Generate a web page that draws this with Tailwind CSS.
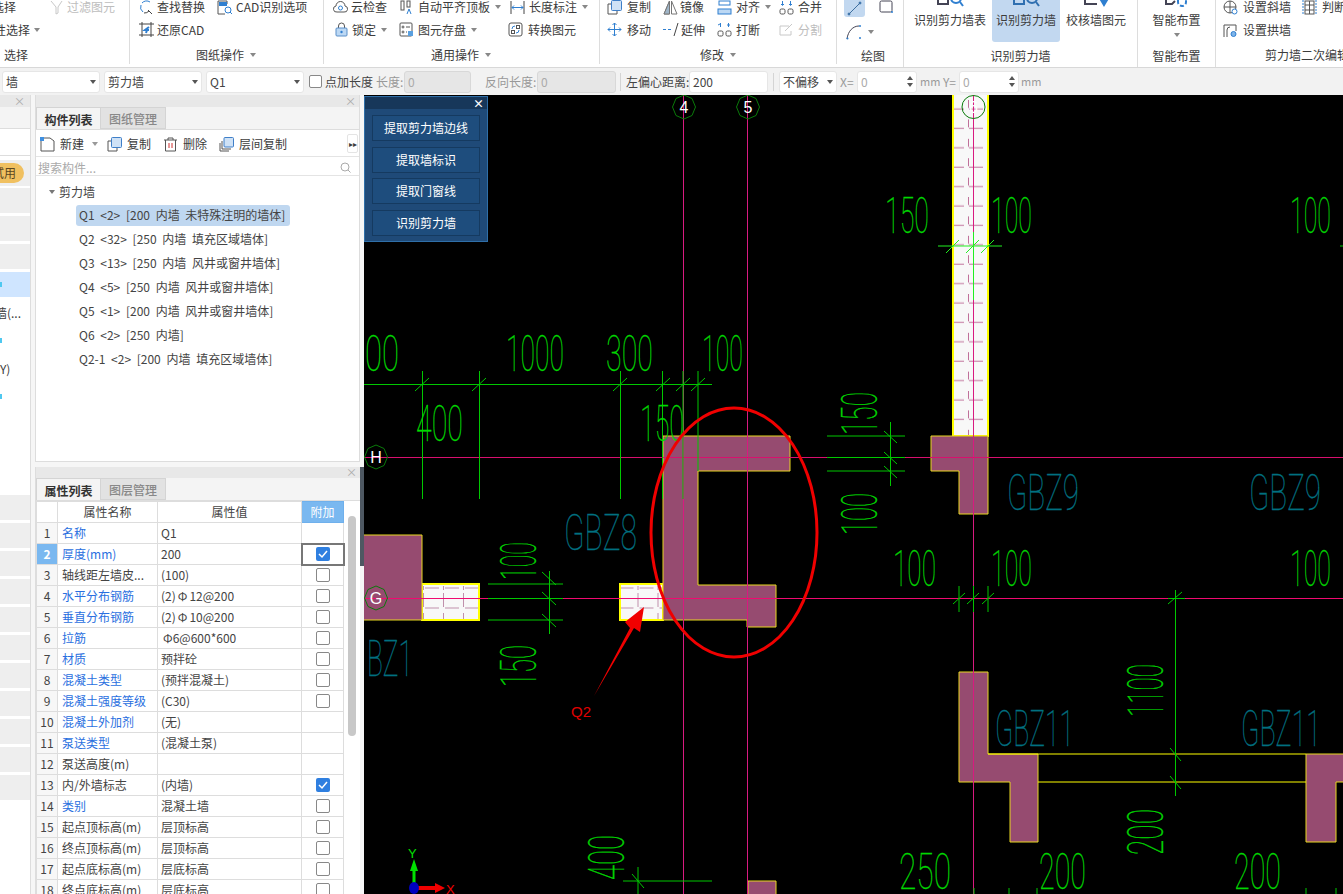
<!DOCTYPE html>
<html lang="zh-CN">
  <head>
    <meta charset="UTF-8" />
    <meta name="viewport" content="width=device-width, initial-scale=1.0" />
    <title>识别剪力墙</title>
    <script src="https://cdn.jsdelivr.net/npm/@tailwindcss/browser@4"></script>
  </head>
  <body class="w-[1343px] h-[894px] overflow-hidden bg-[#f4f4f4] text-[12px] text-[#3c3c3c] font-['Noto_Sans_CJK_SC','Noto_Sans',sans-serif] flex flex-col">
    <!-- ribbon -->
    <div class="h-[68px] shrink-0 bg-white flex overflow-hidden border-b border-[#d8d8d8]">
      <!-- 选择 -->
      <div class="w-[130px] shrink-0 border-r border-[#ddd] flex flex-col -mt-[4px] h-[68px]">
        <div class="h-[23px] flex items-center whitespace-nowrap">
          <span class="w-[16px] overflow-hidden flex justify-end">选择</span>
          <svg class="ml-[34px] w-[13px] h-[15px] text-[#c8c8c8]" viewBox="0 0 13 15" fill="none" stroke="currentColor"><path d="M1 1l5 6v7l2-1V7l4-6" /></svg>
          <span class="ml-[4px] text-[#bdbdbd]">过滤图元</span>
        </div>
        <div class="h-[23px] flex items-center whitespace-nowrap">
          <span class="w-[30px] overflow-hidden flex justify-end">按属性选择</span>
          <span class="ml-[4px] w-0 h-0 border-x-[3px] border-x-transparent border-t-[4px] border-t-[#888]"></span>
        </div>
        <div class="mt-[5px] pl-[4px]">选择</div>
      </div>
      <!-- 图纸操作 -->
      <div class="w-[194px] shrink-0 border-r border-[#ddd] flex flex-col -mt-[4px] h-[68px] pl-[9px]">
        <div class="h-[23px] flex items-center whitespace-nowrap">
          <svg class="w-[15px] h-[15px]" viewBox="0 0 15 15" fill="none" stroke="#2f7fd0"><path d="M11 2a6 6 0 0 0-8 1M2 5a6 6 0 0 0 2 7" /><path stroke="#444" d="M9 10l4 4M5 13a6 6 0 0 0 5-2" /></svg>
          <span class="ml-[3px]">查找替换</span>
          <svg class="ml-[12px] w-[15px] h-[15px]" viewBox="0 0 15 15" fill="none" stroke="#555"><path d="M1 1h9v3M1 1v13h7" /><rect x="2" y="2" width="8" height="4" fill="#2f7fd0" stroke="none" /><circle cx="11" cy="10" r="3" stroke="#2f7fd0" /><path stroke="#2f7fd0" d="M13 12l2 2" /></svg>
          <span class="ml-[4px]">CAD识别选项</span>
        </div>
        <div class="h-[23px] flex items-center whitespace-nowrap">
          <svg class="w-[15px] h-[15px]" viewBox="0 0 15 15" fill="none" stroke="#444"><path d="M3 0v15M12 0v15M0 2h15M0 13h15" /><path stroke="#2f7fd0" stroke-width="2" d="M10 5L6 8l4 0M8 8l-1 3" /></svg>
          <span class="ml-[3px]">还原CAD</span>
        </div>
        <div class="mt-[5px] pl-[57px] flex items-center">图纸操作<span class="ml-[6px] w-0 h-0 border-x-[3.5px] border-x-transparent border-t-[4px] border-t-[#888]"></span></div>
      </div>
      <!-- 通用操作 -->
      <div class="w-[276px] shrink-0 border-r border-[#ddd] flex flex-col -mt-[4px] h-[68px] pl-[9px]">
        <div class="h-[23px] flex items-center whitespace-nowrap">
          <svg class="w-[15px] h-[14px]" viewBox="0 0 15 14" fill="none" stroke="#555"><path d="M4 12a3 3 0 0 1-1-6 4.500 4.500 0 0 1 9 0 3 3 0 0 1-1 6z" /><circle cx="7.500" cy="8" r="2" stroke="#2f7fd0" /></svg>
          <span class="ml-[3px] w-[49px]">云检查</span>
          <svg class="w-[13px] h-[15px]" viewBox="0 0 13 15" fill="none" stroke="#555"><rect x="1" y="1" width="3" height="9" /><rect x="7" y="1" width="3" height="6" /><path stroke="#2f7fd0" d="M7 14l2-5 2 5" /></svg>
          <span class="ml-[5px]">自动平齐顶板</span>
          <span class="ml-[5px] w-0 h-0 border-x-[3px] border-x-transparent border-t-[4px] border-t-[#888]"></span>
          <svg class="ml-[9px] w-[15px] h-[15px]" viewBox="0 0 15 15" fill="none" stroke="#2f7fd0"><path stroke="#444" d="M1 1v13M14 1v13" /><path d="M2 7.500h11M4 5.500l-2 2 2 2M11 5.500l2 2-2 2" /></svg>
          <span class="ml-[4px]">长度标注</span>
          <span class="ml-[5px] w-0 h-0 border-x-[3px] border-x-transparent border-t-[4px] border-t-[#888]"></span>
        </div>
        <div class="h-[23px] flex items-center whitespace-nowrap">
          <svg class="ml-[2px] w-[13px] h-[15px]" viewBox="0 0 13 15" fill="none" stroke="#555"><path d="M3.500 6V4a3 3 0 0 1 6 0v2" /><rect x="1" y="6" width="11" height="8" rx="1" fill="#bcd8f4" stroke="#5a8fc8" /><circle cx="6.500" cy="10" r="1.200" fill="#2f7fd0" stroke="none" /></svg>
          <span class="ml-[4px]">锁定</span>
          <span class="ml-[5px] w-0 h-0 border-x-[3px] border-x-transparent border-t-[4px] border-t-[#888]"></span>
          <svg class="ml-[12px] w-[15px] h-[15px]" viewBox="0 0 15 15" fill="none" stroke="#555"><rect x="1" y="1" width="12" height="13" rx="1" /><circle cx="4" cy="5" r="1" /><circle cx="4" cy="10" r="1" /><path d="M7 5h4M7 10h1" /><rect x="9" y="9" width="5" height="5" fill="#5aa0e0" stroke="none" /></svg>
          <span class="ml-[4px]">图元存盘</span>
          <span class="ml-[5px] w-0 h-0 border-x-[3px] border-x-transparent border-t-[4px] border-t-[#888]"></span>
          <svg class="ml-[31px] w-[15px] h-[15px]" viewBox="0 0 15 15" fill="none" stroke="#555"><rect x="1" y="1" width="13" height="13" rx="2" /><path stroke="#2f7fd0" d="M4 7a3 3 0 0 1 3-3M11 8a3 3 0 0 1-3 3" /><rect x="8.500" y="3.500" width="3" height="3" /><rect x="3.500" y="8.500" width="3" height="3" /></svg>
          <span class="ml-[5px]">转换图元</span>
        </div>
        <div class="mt-[5px] pl-[98px] flex items-center">通用操作<span class="ml-[6px] w-0 h-0 border-x-[3.5px] border-x-transparent border-t-[4px] border-t-[#888]"></span></div>
      </div>
      <!-- 修改 -->
      <div class="w-[237px] shrink-0 border-r border-[#ddd] flex flex-col -mt-[4px] h-[68px] pl-[7px]">
        <div class="h-[23px] flex items-center whitespace-nowrap">
          <svg class="w-[15px] h-[15px]" viewBox="0 0 15 15" fill="none" stroke="#555"><path d="M4 4H1v10h9v-3" /><rect x="4.500" y="0.500" width="10" height="10" rx="1" fill="#cfe2f6" stroke="#3f7fc8" /></svg>
          <span class="ml-[5px] w-[36px]">复制</span>
          <svg class="w-[15px] h-[15px]" viewBox="0 0 15 15" fill="none" stroke="#777"><path d="M6.500 1L1 14h5.500zM8.500 1L14 14H8.500z" /><path d="M6.500 1L1 14h5.500z" fill="#9fb5c8" /></svg>
          <span class="ml-[2px] w-[37px]">镜像</span>
          <svg class="w-[15px] h-[15px]" viewBox="0 0 15 15" fill="none" stroke="#2f7fd0"><rect x="2" y="1" width="11" height="4" /><rect x="1" y="9" width="13" height="5" fill="#bcd8f4" /></svg>
          <span class="ml-[4px]">对齐</span>
          <span class="ml-[5px] w-0 h-0 border-x-[3px] border-x-transparent border-t-[4px] border-t-[#888]"></span>
          <svg class="ml-[8px] w-[15px] h-[15px]" viewBox="0 0 15 15" fill="none" stroke="#555"><rect x="1" y="9" width="5" height="5" rx="1.500" /><rect x="9" y="9" width="5" height="5" rx="1.500" /><path stroke="#2f7fd0" d="M3.500 1v4M11.500 1v4M2 4l1.500 1.500L5 4M10 4l1.500 1.500L13 4" /></svg>
          <span class="ml-[4px]">合并</span>
        </div>
        <div class="h-[23px] flex items-center whitespace-nowrap">
          <svg class="w-[15px] h-[15px]" viewBox="0 0 15 15" fill="none" stroke="#2f7fd0"><path d="M7.500 1v13M1 7.500h13M5.500 3l2-2 2 2M5.500 12l2 2 2-2M3 5.500l-2 2 2 2M12 5.500l2 2-2 2" /></svg>
          <span class="ml-[5px] w-[36px]">移动</span>
          <svg class="w-[16px] h-[15px]" viewBox="0 0 16 15" fill="none" stroke="#2f7fd0"><path stroke-dasharray="3 2" d="M0 7.500h10" /><path stroke="#444" d="M15 1l-4 13" /></svg>
          <span class="ml-[2px] w-[36px]">延伸</span>
          <svg class="w-[15px] h-[15px]" viewBox="0 0 15 15" fill="none" stroke="#555"><rect x="1" y="9" width="5" height="5" rx="1.500" /><rect x="9" y="9" width="5" height="5" rx="1.500" /><path stroke="#2f7fd0" d="M1 3l2-1M3.500 1v4M11.500 1v4M10 3h3" /></svg>
          <span class="ml-[4px]">打断</span>
          <svg class="ml-[19px] w-[16px] h-[15px]" viewBox="0 0 16 15" fill="none" stroke="#c8c8c8"><path d="M12 9v4H1V4h9M6 9l7-7" /></svg>
          <span class="ml-[3px] text-[#bdbdbd]">分割</span>
        </div>
        <div class="mt-[5px] pl-[93px] flex items-center">修改<span class="ml-[6px] w-0 h-0 border-x-[3.5px] border-x-transparent border-t-[4px] border-t-[#888]"></span></div>
      </div>
      <!-- 绘图 -->
      <div class="w-[67px] shrink-0 border-r border-[#ddd] flex flex-col h-[68px] pl-[7px]">
        <div class="h-[19px] flex items-start whitespace-nowrap">
          <span class="w-[21px] h-[17px] bg-[#c2d8f0] rounded-b-[3px] flex items-center justify-center">
            <svg class="w-[15px] h-[15px]" viewBox="0 0 15 15" fill="none" stroke="#3f6f9f"><path d="M2 13L13 2" /><circle cx="2" cy="13" r="1" fill="#2f7fd0" /><circle cx="13" cy="2" r="1" fill="#2f7fd0" /></svg>
          </span>
          <svg class="ml-[14px] w-[14px] h-[14px]" viewBox="0 0 14 14" fill="none" stroke="#445"><rect x="1" y="1" width="12" height="11" rx="1.500" /><circle cx="13" cy="12" r="1" fill="#2f7fd0" stroke="none" /></svg>
        </div>
        <div class="h-[23px] mt-[1px] flex items-center whitespace-nowrap">
          <svg class="ml-[2px] w-[17px] h-[16px]" viewBox="0 0 17 16" fill="none" stroke="#445"><path d="M1 15C2 7 7 2 13 2" /><circle cx="1.500" cy="14.500" r="1" fill="#2f7fd0" stroke="none" /><circle cx="14" cy="2" r="1" fill="#2f7fd0" stroke="none" /><circle cx="14" cy="14" r="1" fill="#2f7fd0" stroke="none" /></svg>
          <span class="ml-[5px] w-0 h-0 border-x-[3px] border-x-transparent border-t-[4px] border-t-[#888]"></span>
        </div>
        <div class="mt-[4px] pl-[17px]">绘图</div>
      </div>
      <!-- 识别剪力墙 -->
      <div class="w-[234px] shrink-0 border-r border-[#ddd] flex flex-col h-[68px]">
        <div class="h-[42px] shrink-0 flex">
          <div class="ml-[10px] w-[72px] flex flex-col items-center">
            <svg class="w-[30px] h-[7px] shrink-0" viewBox="0 0 30 7" fill="none" stroke="#445" stroke-width="2"><path d="M3 0v4h10V0" /><circle cx="21" cy="-2" r="5" stroke="#2f7fd0" /><path stroke="#2f7fd0" d="M25 2l3 4" /></svg>
            <span class="mt-[4px] whitespace-nowrap">识别剪力墙表</span>
          </div>
          <div class="ml-[6px] w-[68px] bg-[#c2d8f0] rounded-b-[3px] flex flex-col items-center">
            <svg class="w-[30px] h-[7px] shrink-0" viewBox="0 0 30 7" fill="none" stroke="#2f6fb0" stroke-width="2"><path d="M3 0v4h10V0" /><circle cx="21" cy="-2" r="5" /><path d="M25 2l3 4" /></svg>
            <span class="mt-[4px] whitespace-nowrap">识别剪力墙</span>
          </div>
          <div class="ml-[6px] w-[60px] flex flex-col items-center">
            <svg class="w-[30px] h-[7px] shrink-0" viewBox="0 0 30 7" fill="none" stroke="#445" stroke-width="2"><path d="M4 0v4h12" /><path stroke="#2f7fd0" fill="#2f7fd0" d="M20 0h6l-3 5z" /></svg>
            <span class="mt-[4px] whitespace-nowrap">校核墙图元</span>
          </div>
        </div>
        <div class="mt-[5px] text-center">识别剪力墙</div>
      </div>
      <!-- 智能布置 -->
      <div class="w-[78px] shrink-0 border-r border-[#ddd] flex flex-col h-[68px] items-center">
        <svg class="w-[28px] h-[7px] shrink-0" viewBox="0 0 28 7" fill="none" stroke="#445" stroke-width="2"><path d="M3 0v4h6l3-3" /><path stroke="#2f7fd0" stroke-dasharray="4 2" d="M15 0v2a4 4 0 0 0 8 0V0" /></svg>
        <span class="mt-[4px] whitespace-nowrap">智能布置</span>
        <span class="mt-[4px] w-0 h-0 border-x-[3.5px] border-x-transparent border-t-[4px] border-t-[#888]"></span>
        <div class="mt-[10px]">智能布置</div>
      </div>
      <!-- 剪力墙二次编辑 -->
      <div class="flex-1 flex flex-col -mt-[4px] h-[68px] pl-[7px] whitespace-nowrap">
        <div class="h-[23px] flex items-center">
          <svg class="w-[15px] h-[15px]" viewBox="0 0 15 15" fill="none" stroke="#555"><circle cx="7" cy="7" r="6" /><path d="M1 7h12M7 1v12" /><circle cx="11.500" cy="11.500" r="2.500" stroke="#2f7fd0" fill="#fff" /></svg>
          <span class="ml-[5px] w-[59px]">设置斜墙</span>
          <svg class="w-[15px] h-[15px]" viewBox="0 0 15 15" fill="none" stroke="#555"><rect x="3" y="1" width="9" height="13" /><path d="M3 5h9M3 10h9M7.500 1v13" /><path stroke="#2f7fd0" stroke-dasharray="2 1" d="M1 0v15M14 0v15" /></svg>
          <span class="ml-[5px]">判断边角柱</span>
        </div>
        <div class="h-[23px] flex items-center">
          <svg class="w-[15px] h-[15px]" viewBox="0 0 15 15" fill="none" stroke="#555"><path d="M1 15V3h12v6M4 15V8a3 3 0 0 1 3-3" /><circle cx="10.500" cy="12" r="2.500" fill="#7fb4e8" stroke="#2f7fd0" /></svg>
          <span class="ml-[5px]">设置拱墙</span>
        </div>
        <div class="mt-[5px] pl-[42px]">剪力墙二次编辑</div>
      </div>
    </div>

    <!-- options bar -->
    <div class="h-[27px] shrink-0 flex items-center bg-[#f2f2f2] pl-[2px] whitespace-nowrap text-[#444]">
      <div class="w-[98px] h-[22px] bg-white rounded-[3px] border border-[#e6e6e6] flex items-center justify-between px-[3px]">墙<span class="w-0 h-0 border-x-[3px] border-x-transparent border-t-[4px] border-t-[#555]"></span></div>
      <div class="ml-[4px] w-[98px] h-[22px] bg-white rounded-[3px] border border-[#e6e6e6] flex items-center justify-between px-[3px]">剪力墙<span class="w-0 h-0 border-x-[3px] border-x-transparent border-t-[4px] border-t-[#555]"></span></div>
      <div class="ml-[4px] w-[98px] h-[22px] bg-white rounded-[3px] border border-[#e6e6e6] flex items-center justify-between px-[3px]">Q1<span class="w-0 h-0 border-x-[3px] border-x-transparent border-t-[4px] border-t-[#555]"></span></div>
      <span class="ml-[5px] w-[13px] h-[13px] bg-white rounded-[2px] border border-[#888]"></span>
      <span class="ml-[3px] w-[48px]">点加长度</span>
      <span class="ml-[4px] w-[27px] text-[#999] -indent-[1px]">长度:</span>
      <div class="w-[67px] h-[22px] bg-[#e6e6e6] rounded-[3px] border border-[#d8d8d8] flex items-center px-[3px] text-[#aaa]">0</div>
      <span class="ml-[14px] w-[52px] text-[#999]">反向长度:</span>
      <div class="w-[79px] h-[22px] bg-[#e6e6e6] rounded-[3px] border border-[#d8d8d8] flex items-center px-[3px] text-[#aaa]">0</div>
      <span class="ml-[4px] w-px h-[18px] bg-[#d4d4d4]"></span>
      <span class="ml-[5px] w-[63px]">左偏心距离:</span>
      <div class="w-[79px] h-[22px] bg-white rounded-[3px] border border-[#e6e6e6] flex items-center px-[3px]">200</div>
      <span class="ml-[5px] w-px h-[18px] bg-[#d4d4d4]"></span>
      <div class="ml-[5px] w-[58px] h-[22px] bg-white rounded-[3px] border border-[#e6e6e6] flex items-center justify-between px-[3px]">不偏移<span class="w-0 h-0 border-x-[3px] border-x-transparent border-t-[4px] border-t-[#555]"></span></div>
      <span class="ml-[3px] w-[17px] text-[#999]">X=</span>
      <div class="w-[60px] h-[22px] bg-white rounded-[3px] border border-[#e6e6e6] flex items-center justify-between px-[3px] text-[#aaa]">0<span class="flex flex-col gap-[3px]"><span class="block w-0 h-0 border-x-[3px] border-x-transparent border-b-[4px] border-b-[#555]"></span><span class="block w-0 h-0 border-x-[3px] border-x-transparent border-t-[4px] border-t-[#555]"></span></span></div>
      <span class="ml-[3px] w-[23px] text-[11px] text-[#999]">mm</span>
      <span class="w-[16px] text-[#999]">Y=</span>
      <div class="w-[60px] h-[22px] bg-white rounded-[3px] border border-[#e6e6e6] flex items-center justify-between px-[3px] text-[#aaa]">0<span class="flex flex-col gap-[3px]"><span class="block w-0 h-0 border-x-[3px] border-x-transparent border-b-[4px] border-b-[#555]"></span><span class="block w-0 h-0 border-x-[3px] border-x-transparent border-t-[4px] border-t-[#555]"></span></span></div>
      <span class="ml-[2px] text-[11px] text-[#999]">mm</span>
    </div>

    <div class="flex-1 flex min-h-0">
      <!-- left nav strip -->
      <div class="w-[31px] shrink-0 bg-white border-r border-[#ddd] flex flex-col overflow-hidden">
        <div class="h-[12px] shrink-0 bg-[#e8e8e8] flex items-center justify-end pr-[5px] text-[#aaa] text-[11px] leading-none">×</div>
        <div class="h-[22px] shrink-0 bg-[#f4f4f4] border-b border-[#ddd]"></div>
        <div class="h-[27px] shrink-0 border-b border-[#ddd]"></div>
        <div class="mt-[4px] h-[26px] shrink-0 bg-[#eee] flex items-center">
          <span class="w-[24px] h-[20px] bg-[#f0c060] rounded-r-full text-[#5a4520] flex items-center justify-end pr-[8px] overflow-hidden whitespace-nowrap">试用</span>
        </div>
        <div class="mt-[2px] h-[25px] shrink-0 bg-[#eee]"></div>
        <div class="mt-[3px] h-[25px] shrink-0 bg-[#eee]"></div>
        <div class="mt-[3px] h-[25px] shrink-0 bg-[#eee]"></div>
        <div class="mt-[3px] h-[25px] shrink-0 bg-[#cfe5ff] flex items-center"><span class="w-[2px] h-[5px] bg-[#4fc8f0]"></span></div>
        <div class="mt-[3px] h-[25px] shrink-0 flex items-center justify-end pr-[9px] overflow-hidden whitespace-nowrap">墙(...</div>
        <div class="mt-[3px] h-[25px] shrink-0 flex items-center"><span class="w-[2px] h-[5px] bg-[#4fc8f0]"></span></div>
        <div class="mt-[3px] h-[25px] shrink-0 flex items-center overflow-hidden whitespace-nowrap">Y)</div>
        <div class="mt-[3px] h-[25px] shrink-0 flex items-center"><span class="w-[2px] h-[5px] bg-[#4fc8f0]"></span></div>
        <div class="mt-[86px] h-[25px] shrink-0 bg-[#eee]"></div>
        <div class="mt-[3px] h-[25px] shrink-0 bg-[#eee]"></div>
        <div class="mt-[3px] h-[25px] shrink-0 bg-[#eee]"></div>
        <div class="mt-[3px] h-[25px] shrink-0 bg-[#eee]"></div>
        <div class="mt-[3px] h-[25px] shrink-0 bg-[#eee]"></div>
        <div class="mt-[3px] h-[25px] shrink-0 bg-[#eee]"></div>
        <div class="mt-[3px] h-[25px] shrink-0 bg-[#eee]"></div>
        <div class="mt-[3px] h-[25px] shrink-0 bg-[#eee]"></div>
        <div class="mt-[3px] h-[25px] shrink-0 bg-[#eee]"></div>
        <div class="mt-[3px] h-[25px] shrink-0 bg-[#eee]"></div>
        <div class="mt-[3px] h-[25px] shrink-0 bg-[#eee]"></div>
      </div>

      <!-- panels -->
      <div class="w-[333px] shrink-0 pl-[4px] pr-[4px] flex flex-col bg-[#f6f6f6] relative">
        <div class="h-[367px] shrink-0 bg-white border-x border-b border-[#ddd] flex flex-col">
          <div class="h-[12px] shrink-0 bg-[#e8e8e8] flex items-center justify-end pr-[3px] text-[#aaa] text-[11px] leading-none">×</div>
          <div class="h-[23px] shrink-0 bg-[#f4f4f4] border-b border-[#ddd] flex">
            <span class="w-[65px] bg-[#f4f4f4] border border-b-0 border-[#d4d4d4] pt-[2px] font-bold text-[#333] flex items-center justify-center">构件列表</span>
            <span class="w-[65px] bg-[#e2e2e2] border-y border-r border-[#d4d4d4] pt-[2px] text-[#888] font-medium flex items-center justify-center">图纸管理</span>
          </div>
          <div class="h-[27px] shrink-0 border-b border-[#e4e4e4] flex items-center pl-[4px] pt-[2px] relative">
            <svg class="w-[15px] h-[15px]" viewBox="0 0 15 15" fill="none" stroke="#555"><path d="M4 1h6l4 3v10H1V4" /><rect x="0" y="0" width="4" height="4" fill="#3f8fe0" stroke="none" /></svg>
            <span class="ml-[5px]">新建</span>
            <span class="ml-[8px] w-0 h-0 border-x-[3px] border-x-transparent border-t-[4px] border-t-[#999]"></span>
            <svg class="ml-[9px] w-[15px] h-[15px]" viewBox="0 0 15 15" fill="none" stroke="#555"><path d="M4 4H1v10h9v-3" /><rect x="4.500" y="0.500" width="10" height="10" rx="1" fill="#cfe2f6" stroke="#3f7fc8" /></svg>
            <span class="ml-[5px]">复制</span>
            <svg class="ml-[13px] w-[13px] h-[15px]" viewBox="0 0 13 15" fill="none" stroke="#555"><path d="M0 3h13M4 3V1h5v2M1.500 3v11h10V3" /><path stroke="#d03030" d="M5 6v5M8 6v5" /></svg>
            <span class="ml-[6px]">删除</span>
            <svg class="ml-[12px] w-[15px] h-[15px]" viewBox="0 0 15 15" fill="none" stroke="#555"><path d="M1 6v8h9M3 4v8h9" /><rect x="5" y="0.500" width="9.500" height="9.500" rx="1" fill="#cfe2f6" stroke="#3f7fc8" /></svg>
            <span class="ml-[5px]">层间复制</span>
            <span class="absolute right-[1px] top-[4px] w-[11px] h-[19px] border border-[#e4e4e4] rounded-[2px] flex items-center justify-center text-[8px] leading-none">▸▸</span>
          </div>
          <div class="h-[19px] shrink-0 border-b border-[#e4e4e4] flex items-center justify-between pl-[2px] pr-[8px] pt-[3px] text-[#aaa]">
            <span>搜索构件...</span>
            <svg class="w-[11px] h-[11px]" viewBox="0 0 11 11" fill="none" stroke="#aaa"><circle cx="5" cy="5" r="4" /><path d="M8 8l2.500 2.500" /></svg>
          </div>
          <div class="pt-[4px] pl-[13px] flex flex-col text-[#444] [word-spacing:3px]">
            <div class="h-[23px] flex items-center"><span class="w-0 h-0 border-x-[3.500px] border-x-transparent border-t-[4px] border-t-[#777]"></span><span class="ml-[4px]">剪力墙</span></div>
            <div class="ml-[27px] w-[214px] h-[21px] my-[1.500px] bg-[#bfd7f0] rounded-[3px] flex items-center pl-[3px] whitespace-nowrap">Q1 &lt;2&gt; [200 内墙 未特殊注明的墙体]</div>
            <div class="ml-[27px] h-[24px] flex items-center pl-[3px] whitespace-nowrap">Q2 &lt;32&gt; [250 内墙 填充区域墙体]</div>
            <div class="ml-[27px] h-[24px] flex items-center pl-[3px] whitespace-nowrap">Q3 &lt;13&gt; [250 内墙 风井或窗井墙体]</div>
            <div class="ml-[27px] h-[24px] flex items-center pl-[3px] whitespace-nowrap">Q4 &lt;5&gt; [250 内墙 风井或窗井墙体]</div>
            <div class="ml-[27px] h-[24px] flex items-center pl-[3px] whitespace-nowrap">Q5 &lt;1&gt; [200 内墙 风井或窗井墙体]</div>
            <div class="ml-[27px] h-[24px] flex items-center pl-[3px] whitespace-nowrap">Q6 &lt;2&gt; [250 内墙]</div>
            <div class="ml-[27px] h-[24px] flex items-center pl-[3px] whitespace-nowrap">Q2-1 &lt;2&gt; [200 内墙 填充区域墙体]</div>
          </div>
        </div>

        <div class="mt-[5px] flex-1 bg-white border-l border-[#ddd] flex flex-col overflow-hidden relative">
          <div class="h-[11px] shrink-0 bg-[#e8e8e8] flex items-center justify-end pr-[3px] text-[#aaa] text-[11px] leading-none">×</div>
          <div class="h-[23px] shrink-0 bg-[#f4f4f4] border-b border-[#ddd] flex">
            <span class="w-[65px] bg-[#f4f4f4] border border-b-0 border-[#d4d4d4] pt-[2px] font-bold text-[#333] flex items-center justify-center">属性列表</span>
            <span class="w-[65px] bg-[#e2e2e2] border-y border-r border-[#d4d4d4] pt-[2px] text-[#888] font-medium flex items-center justify-center">图层管理</span>
          </div>
          <table class="table-fixed border-collapse w-[307px] text-[#444]">
            <colgroup><col class="w-[21px]" /><col class="w-[100px]" /><col class="w-[144px]" /><col class="w-[42px]" /></colgroup>
            <thead>
              <tr class="h-[21px]">
                <th class="border border-[#ddd] font-normal"></th>
                <th class="border border-[#ddd] font-normal">属性名称</th>
                <th class="border border-[#ddd] font-normal">属性值</th>
                <th class="border border-[#6fb0ec] bg-[#7ab8f0] text-white font-normal">附加</th>
              </tr>
            </thead>
            <tbody>
              <tr class="h-[21px]"><td class="border border-[#ddd] text-center bg-[#f7f7f7]">1</td><td class="border border-[#ddd] px-[4px] text-[#2a6fe0] whitespace-nowrap">名称</td><td class="border border-[#ddd] px-[3px]">Q1</td><td class="border border-[#ddd]"></td></tr>
              <tr class="h-[21px]"><td class="border border-[#ddd] text-center bg-[#7ab8f0] text-white font-bold">2</td><td class="border border-[#ddd] px-[4px] text-[#2a6fe0] whitespace-nowrap">厚度(mm)</td><td class="border border-[#ddd] px-[3px]">200</td><td class="border-2 border-[#777]"><span class="mx-auto w-[14px] h-[14px] rounded-[2px] bg-[#2f7fe0] flex items-center justify-center"><svg class="w-[10px] h-[10px]" viewBox="0 0 10 10" fill="none" stroke="#fff" stroke-width="1.500"><path d="M1 5l3 3 5-6" /></svg></span></td></tr>
              <tr class="h-[21px]"><td class="border border-[#ddd] text-center bg-[#f7f7f7]">3</td><td class="border border-[#ddd] px-[4px] whitespace-nowrap">轴线距左墙皮...</td><td class="border border-[#ddd] px-[3px]">(100)</td><td class="border border-[#ddd]"><span class="block mx-auto w-[14px] h-[14px] rounded-[2px] border border-[#888]"></span></td></tr>
              <tr class="h-[21px]"><td class="border border-[#ddd] text-center bg-[#f7f7f7]">4</td><td class="border border-[#ddd] px-[4px] text-[#2a6fe0] whitespace-nowrap">水平分布钢筋</td><td class="border border-[#ddd] px-[3px]">(2)<span class="px-[2px]">Φ</span>12@200</td><td class="border border-[#ddd]"><span class="block mx-auto w-[14px] h-[14px] rounded-[2px] border border-[#888]"></span></td></tr>
              <tr class="h-[21px]"><td class="border border-[#ddd] text-center bg-[#f7f7f7]">5</td><td class="border border-[#ddd] px-[4px] text-[#2a6fe0] whitespace-nowrap">垂直分布钢筋</td><td class="border border-[#ddd] px-[3px]">(2)<span class="px-[2px]">Φ</span>10@200</td><td class="border border-[#ddd]"><span class="block mx-auto w-[14px] h-[14px] rounded-[2px] border border-[#888]"></span></td></tr>
              <tr class="h-[21px]"><td class="border border-[#ddd] text-center bg-[#f7f7f7]">6</td><td class="border border-[#ddd] px-[4px] text-[#2a6fe0] whitespace-nowrap">拉筋</td><td class="border border-[#ddd] px-[3px] pl-[5px]">Φ6@600*600</td><td class="border border-[#ddd]"><span class="block mx-auto w-[14px] h-[14px] rounded-[2px] border border-[#888]"></span></td></tr>
              <tr class="h-[21px]"><td class="border border-[#ddd] text-center bg-[#f7f7f7]">7</td><td class="border border-[#ddd] px-[4px] text-[#2a6fe0] whitespace-nowrap">材质</td><td class="border border-[#ddd] px-[3px]">预拌砼</td><td class="border border-[#ddd]"><span class="block mx-auto w-[14px] h-[14px] rounded-[2px] border border-[#888]"></span></td></tr>
              <tr class="h-[21px]"><td class="border border-[#ddd] text-center bg-[#f7f7f7]">8</td><td class="border border-[#ddd] px-[4px] text-[#2a6fe0] whitespace-nowrap">混凝土类型</td><td class="border border-[#ddd] px-[3px]">(预拌混凝土)</td><td class="border border-[#ddd]"><span class="block mx-auto w-[14px] h-[14px] rounded-[2px] border border-[#888]"></span></td></tr>
              <tr class="h-[21px]"><td class="border border-[#ddd] text-center bg-[#f7f7f7]">9</td><td class="border border-[#ddd] px-[4px] text-[#2a6fe0] whitespace-nowrap">混凝土强度等级</td><td class="border border-[#ddd] px-[3px]">(C30)</td><td class="border border-[#ddd]"><span class="block mx-auto w-[14px] h-[14px] rounded-[2px] border border-[#888]"></span></td></tr>
              <tr class="h-[21px]"><td class="border border-[#ddd] text-center bg-[#f7f7f7]">10</td><td class="border border-[#ddd] px-[4px] text-[#2a6fe0] whitespace-nowrap">混凝土外加剂</td><td class="border border-[#ddd] px-[3px]">(无)</td><td class="border border-[#ddd]"></td></tr>
              <tr class="h-[21px]"><td class="border border-[#ddd] text-center bg-[#f7f7f7]">11</td><td class="border border-[#ddd] px-[4px] text-[#2a6fe0] whitespace-nowrap">泵送类型</td><td class="border border-[#ddd] px-[3px]">(混凝土泵)</td><td class="border border-[#ddd]"></td></tr>
              <tr class="h-[21px]"><td class="border border-[#ddd] text-center bg-[#f7f7f7]">12</td><td class="border border-[#ddd] px-[4px] whitespace-nowrap">泵送高度(m)</td><td class="border border-[#ddd] px-[3px]"></td><td class="border border-[#ddd]"></td></tr>
              <tr class="h-[21px]"><td class="border border-[#ddd] text-center bg-[#f7f7f7]">13</td><td class="border border-[#ddd] px-[4px] whitespace-nowrap">内/外墙标志</td><td class="border border-[#ddd] px-[3px]">(内墙)</td><td class="border border-[#ddd]"><span class="mx-auto w-[14px] h-[14px] rounded-[2px] bg-[#2f7fe0] flex items-center justify-center"><svg class="w-[10px] h-[10px]" viewBox="0 0 10 10" fill="none" stroke="#fff" stroke-width="1.500"><path d="M1 5l3 3 5-6" /></svg></span></td></tr>
              <tr class="h-[21px]"><td class="border border-[#ddd] text-center bg-[#f7f7f7]">14</td><td class="border border-[#ddd] px-[4px] text-[#2a6fe0] whitespace-nowrap">类别</td><td class="border border-[#ddd] px-[3px]">混凝土墙</td><td class="border border-[#ddd]"><span class="block mx-auto w-[14px] h-[14px] rounded-[2px] border border-[#888]"></span></td></tr>
              <tr class="h-[21px]"><td class="border border-[#ddd] text-center bg-[#f7f7f7]">15</td><td class="border border-[#ddd] px-[4px] whitespace-nowrap">起点顶标高(m)</td><td class="border border-[#ddd] px-[3px]">层顶标高</td><td class="border border-[#ddd]"><span class="block mx-auto w-[14px] h-[14px] rounded-[2px] border border-[#888]"></span></td></tr>
              <tr class="h-[21px]"><td class="border border-[#ddd] text-center bg-[#f7f7f7]">16</td><td class="border border-[#ddd] px-[4px] whitespace-nowrap">终点顶标高(m)</td><td class="border border-[#ddd] px-[3px]">层顶标高</td><td class="border border-[#ddd]"><span class="block mx-auto w-[14px] h-[14px] rounded-[2px] border border-[#888]"></span></td></tr>
              <tr class="h-[21px]"><td class="border border-[#ddd] text-center bg-[#f7f7f7]">17</td><td class="border border-[#ddd] px-[4px] whitespace-nowrap">起点底标高(m)</td><td class="border border-[#ddd] px-[3px]">层底标高</td><td class="border border-[#ddd]"><span class="block mx-auto w-[14px] h-[14px] rounded-[2px] border border-[#888]"></span></td></tr>
              <tr class="h-[21px]"><td class="border border-[#ddd] text-center bg-[#f7f7f7]">18</td><td class="border border-[#ddd] px-[4px] whitespace-nowrap">终点底标高(m)</td><td class="border border-[#ddd] px-[3px]">层底标高</td><td class="border border-[#ddd]"><span class="block mx-auto w-[14px] h-[14px] rounded-[2px] border border-[#888]"></span></td></tr>
            </tbody>
          </table>
          <!-- scrollbar -->
          <span class="absolute left-[312px] top-[49px] w-[8px] h-[220px] rounded-full bg-[#c8c8c8]"></span>
        </div>
        <!-- splitter handle -->
        <span class="absolute right-0 top-[372px] w-[4px] h-[99px] bg-[#4e5862]"></span>
      </div>

      <!-- drawing canvas -->
      <div class="flex-1 relative bg-black overflow-hidden">
        <svg class="absolute inset-0 w-[979px] h-[799px]" viewBox="364 95 979 799" fill="none">
          <defs>
            <pattern id="hatchV" x="953" y="100" width="35" height="19.400" patternUnits="userSpaceOnUse">
              <path d="M0 9h11M16 9h14M15.500 0v8" stroke="#c0709a" />
            </pattern>
            <pattern id="hatchH" x="424" y="584" width="20" height="36" patternUnits="userSpaceOnUse">
              <path d="M1 4h14M1 24h14M19.500 2v4M19.500 9v14M19.500 29v6" stroke="#c090ac" />
            </pattern>
            <pattern id="hatchH2" x="618.500" y="584" width="20" height="36" patternUnits="userSpaceOnUse">
              <path d="M1 4h14M1 24h14M19.500 2v4M19.500 9v14M19.500 29v6" stroke="#c090ac" />
            </pattern>
          </defs>

          <!-- walls -->
          <rect x="953" y="90" width="35" height="346" fill="#f8f8f8" />
          <rect x="953" y="90" width="35" height="346" fill="url(#hatchV)" stroke="#ffff00" stroke-width="2" />
          <rect x="422" y="584" width="57" height="36" fill="#f8f8f8" />
          <rect x="422" y="584" width="57" height="36" fill="url(#hatchH)" stroke="#ffff00" stroke-width="2" />
          <rect x="620" y="584" width="43" height="36" fill="#f8f8f8" />
          <rect x="620" y="584" width="43" height="36" fill="url(#hatchH2)" stroke="#ffff00" stroke-width="2" />

          <!-- columns -->
          <g fill="#964b70" stroke="#e8d820">
            <path d="M663 436H790V471H698V585H776V627H747V620H663Z" />
            <path d="M360 535H422V620H360Z" />
            <path d="M931 436H988V514H959V471H931Z" />
            <path d="M959 672H988V754H1038V842H1010V782H959Z" />
            <path d="M1306 754H1350V782H1336V842H1306Z" />
            <path d="M748 881H776V900H748Z" />
          </g>
          <path d="M988 754H1306M1038 782H1306" stroke="#ffff00" />

          <!-- axis lines -->
          <g stroke="#d81a80">
            <path d="M683.500 95V894M747.500 95V894M973.500 95V894" />
            <path d="M364 457.500H1343" stroke="#d8106e" />
            <path d="M364 598.500H1343" stroke="#f00a70" />
          </g>

          <!-- dimensions -->
          <g stroke="#00c800">
            <path d="M364 384.500H712M422.500 371V499M479.500 371V499M620.500 371V499M662.500 371V499M683 371V499M698 371V471" />
            <path d="M415 391l14-13M472 391l14-13M613 391l14-13M656 391l14-13M676 391l14-13M691 391l14-13" />
            <path d="M488 584H563M488 598.500H563M488 620H563M549.500 571V634M542 572l14 13M542 592l14 13M542 614l14 13" />
            <path d="M827 436H905M827 457.500H905M827 471H905M890.500 422V486M884 431l13 12M884 452l13 12M884 466l13 12" />
            <path d="M959 586V612M973.500 586V612M988 586V612M953 604l12-11M967 604l12-11M982 604l12-11" />
            <path d="M1168 598.500H1185M1175.500 590V796M1168 604l14-12M1170 748l11 13M1170 776l11 13" />
            <path d="M623 881H712M638 867V894M632 874l12 14" />
            <path d="M974 888V894M1009 888V894M1037 888V894M1306 888V894M1336 888V894" />
            <path d="M1340 246H1343" />
          </g>
          <path d="M938 246H1002M973.500 232V300M946 253l13-13M966 253l13-13M981 253l13-13" stroke="#20f020" />

          <!-- dimension labels -->
          <g font-family="Roboto" font-weight="100" font-size="50" fill="#00d800" stroke="#00d800" stroke-width="0.300">
            <text x="348" y="371" textLength="51" lengthAdjust="spacingAndGlyphs">500</text>
            <text x="506" y="371" textLength="58" lengthAdjust="spacingAndGlyphs">1000</text>
            <text x="606" y="371" textLength="47" lengthAdjust="spacingAndGlyphs">300</text>
            <text x="702" y="371" textLength="41" lengthAdjust="spacingAndGlyphs">100</text>
            <text x="416" y="441" textLength="47" lengthAdjust="spacingAndGlyphs">400</text>
            <text x="640" y="441" textLength="44" lengthAdjust="spacingAndGlyphs">150</text>
            <text x="885" y="233" textLength="44" lengthAdjust="spacingAndGlyphs">150</text>
            <text x="991" y="233" textLength="41" lengthAdjust="spacingAndGlyphs">100</text>
            <text x="1290" y="233" textLength="41" lengthAdjust="spacingAndGlyphs">100</text>
            <text x="893" y="586" textLength="43" lengthAdjust="spacingAndGlyphs">100</text>
            <text x="991" y="586" textLength="41" lengthAdjust="spacingAndGlyphs">100</text>
            <text x="1290" y="586" textLength="41" lengthAdjust="spacingAndGlyphs">100</text>
            <text x="899" y="889" textLength="52" lengthAdjust="spacingAndGlyphs">250</text>
            <text x="1039" y="889" textLength="47" lengthAdjust="spacingAndGlyphs">200</text>
            <text x="1234" y="889" textLength="47" lengthAdjust="spacingAndGlyphs">200</text>
            <text transform="translate(877 435) rotate(-90)" textLength="43" lengthAdjust="spacingAndGlyphs">150</text>
            <text transform="translate(877 535) rotate(-90)" textLength="42" lengthAdjust="spacingAndGlyphs">100</text>
            <text transform="translate(536 580) rotate(-90)" textLength="38" lengthAdjust="spacingAndGlyphs">100</text>
            <text transform="translate(536 687) rotate(-90)" textLength="42" lengthAdjust="spacingAndGlyphs">150</text>
            <text transform="translate(1163 717) rotate(-90)" textLength="53" lengthAdjust="spacingAndGlyphs">1100</text>
            <text transform="translate(1163 855) rotate(-90)" textLength="46" lengthAdjust="spacingAndGlyphs">200</text>
            <text transform="translate(624 880) rotate(-90)" textLength="45" lengthAdjust="spacingAndGlyphs">400</text>
          </g>
          <g font-family="Roboto" font-weight="100" font-size="50" fill="#007080" stroke="#007080" stroke-width="0.300">
            <text x="564" y="550" textLength="73" lengthAdjust="spacingAndGlyphs">GBZ8</text>
            <text x="367" y="676" textLength="46" lengthAdjust="spacingAndGlyphs">BZ1</text>
            <text x="1007" y="510" textLength="72" lengthAdjust="spacingAndGlyphs">GBZ9</text>
            <text x="1249" y="510" textLength="72" lengthAdjust="spacingAndGlyphs">GBZ9</text>
            <text x="995" y="746" textLength="79" lengthAdjust="spacingAndGlyphs">GBZ11</text>
            <text x="1241" y="746" textLength="80" lengthAdjust="spacingAndGlyphs">GBZ11</text>
          </g>

          <!-- axis bubbles -->
          <g stroke="#0a7a0a">
            <path d="M684 95l8 3.500 3.500 8.500-3.500 8.500-8 3.500-8-3.500-3.500-8.500 3.500-8.500z" />
            <path d="M748 95l8 3.500 3.500 8.500-3.500 8.500-8 3.500-8-3.500-3.500-8.500 3.500-8.500z" />
            <path d="M376 445l8 3.500 3.500 8.500-3.500 8.500-8 3.500-8-3.500-3.500-8.500 3.500-8.500z" />
            <path d="M376 586l8 3.500 3.500 8.500-3.500 8.500-8 3.500-8-3.500-3.500-8.500 3.500-8.500z" />
          </g>
          <circle cx="973.500" cy="107" r="11.500" stroke="#0a7a0a" />
          <g font-family="Liberation Sans" font-size="16" fill="#fff" text-anchor="middle">
            <text x="684" y="113">4</text>
            <text x="748" y="113">5</text>
            <text x="376" y="463">H</text>
            <text x="376" y="604">G</text>
            <text x="973.500" y="113">6</text>
          </g>

          <!-- annotation -->
          <ellipse cx="734" cy="532.500" rx="83" ry="124.500" stroke="#f00000" stroke-width="3" />
          <path d="M594 696L630 628 625 622 644 607 640 632 634 628Z" fill="#f00000" />
          <text x="571" y="717" font-family="Liberation Sans" font-size="15" fill="#e00000">Q2</text>

          <!-- ucs icon -->
          <path d="M414 884V870" stroke="#00e000" stroke-width="3" />
          <path d="M414 859l4 12h-8z" fill="#00e000" />
          <path d="M418 888H436" stroke="#f00000" stroke-width="4" />
          <path d="M445 888l-10-5v10z" fill="#f00000" />
          <ellipse cx="414" cy="888" rx="5" ry="6" fill="#0000c0" />
          <text x="408" y="858" font-family="Liberation Sans" font-size="13" fill="#00e000">Y</text>
          <text x="446" y="894" font-family="Liberation Sans" font-size="13" fill="#f00000">X</text>
        </svg>

        <!-- floating command panel -->
        <div class="absolute left-0 top-[1px] w-[124px] h-[146px] bg-[#1f4a78] border border-[#2f6fa8] flex flex-col text-white">
          <div class="h-[12px] shrink-0 bg-[#17375a] flex items-center justify-end pr-[3px] text-[11px] leading-none font-bold">×</div>
          <div class="pt-[6px] px-[7px] flex flex-col gap-[5.500px]">
            <div class="h-[26px] bg-[#1e4d7d] border border-[#153a60] flex items-center justify-center">提取剪力墙边线</div>
            <div class="h-[26px] bg-[#1e4d7d] border border-[#153a60] flex items-center justify-center">提取墙标识</div>
            <div class="h-[26px] bg-[#1e4d7d] border border-[#153a60] flex items-center justify-center">提取门窗线</div>
            <div class="h-[26px] bg-[#1e4d7d] border border-[#153a60] flex items-center justify-center">识别剪力墙</div>
          </div>
        </div>
      </div>
    </div>
  </body>
</html>
